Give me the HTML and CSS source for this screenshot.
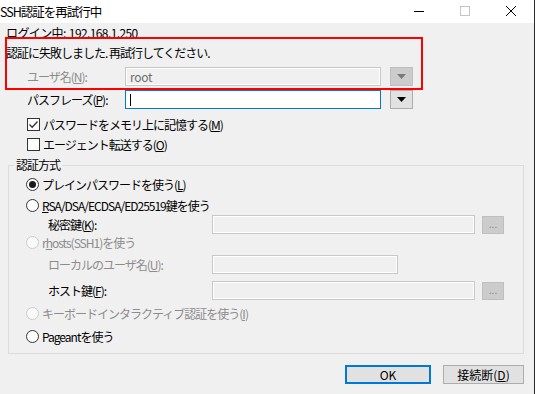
FILE: index.html
```html
<!DOCTYPE html>
<html lang="ja">
<head>
<meta charset="utf-8">
<title>SSH認証を再試行中</title>
<link rel="stylesheet" href="styles.css">
</head>
<body>
<div class="window">
  <div class="titlebar">
    <span class="title">SSH認証を再試行中</span>
    <div class="controls">
      <span class="ctl"><svg width="10" height="10" viewBox="0 0 10 10"><line x1="0" y1="5.5" x2="10" y2="5.5" stroke="#000" stroke-width="1"/></svg></span>
      <span class="ctl"><svg width="10" height="10" viewBox="0 0 10 10"><rect x="0.5" y="0.5" width="9" height="9" fill="none" stroke="#c4c4c4" stroke-width="1"/></svg></span>
      <span class="ctl"><svg width="10" height="10" viewBox="0 0 10 10"><path d="M0 0 L10 10 M10 0 L0 10" stroke="#000" stroke-width="1"/></svg></span>
    </div>
  </div>

  <div class="content">
    <div class="info login">ログイン中: 192.168.1.250</div>
    <div class="info">認証に失敗しました. 再試行してください.</div>

    <div class="field user-row">
      <span class="flabel dis">ユーザ名(<u>N</u>):</span>
      <div class="edit edit-dis wide">root</div>
      <div class="drop drop-dis"><svg width="9" height="5" viewBox="0 0 9 5"><polygon points="0,0 9,0 4.5,5" fill="#7a7a7a"/></svg></div>
    </div>

    <div class="field pass-row">
      <span class="flabel">パスフレーズ(<u>P</u>):</span>
      <div class="edit edit-focus wide"><span class="caret"></span></div>
      <div class="drop"><svg width="9" height="5" viewBox="0 0 9 5"><polygon points="0,0 9,0 4.5,5" fill="#000"/></svg></div>
    </div>

    <div class="check first">
      <span class="box"><svg width="11" height="11" viewBox="0 0 11 11"><path d="M1.5 5.5 L4.2 8.2 L9.5 2.5" fill="none" stroke="#333" stroke-width="1.3"/></svg></span>
      <span>パスワードをメモリ上に記憶する(<u>M</u>)</span>
    </div>
    <div class="check">
      <span class="box"></span>
      <span>エージェント転送する(<u>O</u>)</span>
    </div>

    <fieldset class="group">
      <legend>認証方式</legend>

      <div class="opt r1"><span class="radio on"></span><span>プレインパスワードを使う(<u>L</u>)</span></div>
      <div class="opt r2"><span class="radio"></span><span><u>R</u>SA/DSA/ECDSA/ED25519鍵を使う</span></div>

      <div class="sub key-row">
        <span class="slabel">秘密鍵(<u>K</u>):</span>
        <div class="edit edit-dis long"></div>
        <div class="dots">...</div>
      </div>

      <div class="opt r3 dis"><span class="radio off"></span><span>r<u>h</u>osts(SSH1)を使う</span></div>

      <div class="sub local-row">
        <span class="slabel dis">ローカルのユーザ名(<u>U</u>):</span>
        <div class="edit edit-dis mid"></div>
      </div>

      <div class="sub host-row">
        <span class="slabel">ホスト鍵(<u>F</u>):</span>
        <div class="edit edit-dis long"></div>
        <div class="dots">...</div>
      </div>

      <div class="opt r4 dis"><span class="radio off"></span><span>キーボードインタラクティブ認証を使う(<u>I</u>)</span></div>
      <div class="opt r5"><span class="radio"></span><span>Pageantを使う</span></div>
    </fieldset>

    <div class="buttons">
      <div class="btn btn-default">OK</div>
      <div class="btn btn-cancel">接続断(<u>D</u>)</div>
    </div>
  </div>

  <div class="annotation"></div>
</div>
</body>
</html>
```

FILE: styles.css
```css
* { box-sizing: border-box; }

html, body {
  margin: 0;
  padding: 0;
  background: #f0f0f0;
}

body {
  font-family: "Noto Sans CJK JP", "Noto Sans", sans-serif;
  font-size: 12px;
  letter-spacing: -1px;
  color: #000;
}

u { text-decoration: underline; text-underline-offset: 1px; }

.window {
  position: relative;
  width: 535px;
  height: 394px;
  background: #f0f0f0;
  border-right: 1px solid #2b2b2b;
  overflow: hidden;
}

.titlebar {
  height: 23px;
  background: #fff;
  display: flex;
  align-items: center;
  justify-content: space-between;
}

.title {
  font-size: 12.5px;
  letter-spacing: -1px;
  line-height: 22px;
}

.controls {
  display: flex;
  height: 23px;
}

.ctl {
  width: 46px;
  height: 22px;
  display: flex;
  align-items: center;
  justify-content: center;
}

.content {
  display: flex;
  flex-direction: column;
}

.info {
  height: 20px;
  line-height: 20px;
  padding-left: 6px;
}

.info.login {
  letter-spacing: -0.6px;
  word-spacing: 1px;
}

.field {
  display: flex;
  align-items: center;
  height: 19px;
  margin-top: 4px;
  padding-left: 27px;
}

.flabel { width: 98px; }

.dis { color: #8c8c8c; }

.edit {
  height: 19px;
  border: 1px solid #c8c8c8;
  line-height: 17px;
  padding-left: 4px;
}

.edit-dis {
  background: #f0f0f0;
  box-shadow: inset 0 0 0 1px #fff;
  color: #6d6d6d;
  letter-spacing: -0.3px;
}

.edit-focus {
  background: #fff;
  border-color: #0078d7;
  display: flex;
  align-items: center;
}

.caret {
  display: block;
  width: 1px;
  height: 12px;
  background: #000;
}

.wide { width: 256px; }
.long { width: 263px; }
.mid { width: 186px; }

.drop {
  width: 23px;
  height: 19px;
  margin-left: 9px;
  background: #e1e1e1;
  border: 1px solid #adadad;
  display: flex;
  align-items: center;
  justify-content: center;
}

.drop-dis {
  background: #cccccc;
  border-color: #bfbfbf;
}

.check {
  display: flex;
  align-items: center;
  height: 16px;
  margin-top: 4px;
  padding-left: 27px;
  gap: 3px;
}

.check.first { margin-top: 7px; }

.box {
  width: 13px;
  height: 13px;
  border: 1px solid #333;
  background: #fff;
  display: flex;
  align-items: center;
  justify-content: center;
}

.group {
  margin: 6px 10px 0 8px;
  padding: 0 0 9px 0;
  border: 1px solid #dcdcdc;
  min-inline-size: 0;
}

.group legend {
  margin-left: 5px;
  padding: 0 2px;
  line-height: 14px;
  height: 14px;
}

.opt {
  display: flex;
  align-items: center;
  height: 16px;
  padding-left: 17px;
  gap: 3px;
}

.r1 { margin-top: 4px; }
.r2 { margin-top: 5px; }
.r3 { margin-top: 0; }
.r4 { margin-top: 5px; }
.r5 { margin-top: 7px; }

.radio {
  width: 13px;
  height: 13px;
  border-radius: 50%;
  border: 1px solid #333;
  background: #fff;
  display: flex;
  align-items: center;
  justify-content: center;
}

.radio.on::after {
  content: "";
  width: 7px;
  height: 7px;
  border-radius: 50%;
  background: #1a1a1a;
}

.radio.off {
  border-color: #cccccc;
  background: #fafafa;
}

.sub {
  display: flex;
  align-items: center;
  height: 19px;
  padding-left: 39px;
}

.slabel { width: 164px; }

.key-row { margin-top: 2px; }
.local-row { margin-top: 5px; }
.host-row { margin-top: 7px; }

.dots {
  width: 22px;
  height: 18px;
  margin-left: 7px;
  background: #cccccc;
  border: 1px solid #bfbfbf;
  color: #838383;
  font-size: 10px;
  letter-spacing: 0;
  line-height: 14px;
  text-align: center;
}

.buttons {
  display: flex;
  justify-content: flex-end;
  gap: 12px;
  margin-top: 11px;
  padding-right: 10px;
}

.btn {
  height: 19px;
  background: #e1e1e1;
  border: 1px solid #adadad;
  display: flex;
  align-items: center;
  justify-content: center;
  letter-spacing: 0;
}

.btn-default {
  width: 86px;
  border: 2px solid #0078d7;
}

.btn-cancel {
  width: 81px;
}

.annotation {
  position: absolute;
  left: 5px;
  top: 37px;
  width: 418px;
  height: 53px;
  border: 2px solid #ff0000;
  pointer-events: none;
}
```
